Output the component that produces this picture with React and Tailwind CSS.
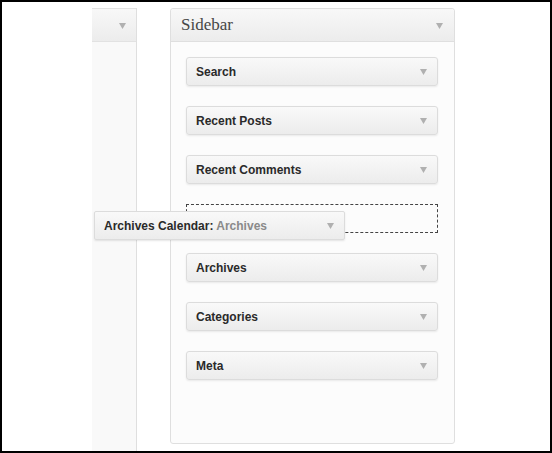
import React from "react";

const Arrow = () => (
  <svg width="7" height="7" viewBox="0 0 7 7" className="shrink-0">
    <polygon points="0,1 7,1 3.5,7" fill="#b0b0b0" />
  </svg>
);

const Widget = ({ title, sub }) => (
  <div className="w-[252px] h-[29px] flex items-center justify-between pl-[9px] pr-[10px] border border-[#dcdcdc] rounded-[3px] bg-gradient-to-b from-[#f9f9f9] to-[#ececec] shadow-[0_1px_2px_rgba(0,0,0,0.08)]">
    <span className="text-[12px] font-bold text-[#2a2a2a]">
      {title}
      {sub && <span className="text-[#8a8a8a]"> {sub}</span>}
    </span>
    <Arrow />
  </div>
);

const widgets = ["Search", "Recent Posts", "Recent Comments", null, "Archives", "Categories", "Meta"];

export default function App() {
  return (
    <div className="w-[552px] h-[453px] border-2 border-black bg-white relative overflow-hidden font-['Liberation_Sans',Arial,sans-serif]">
      <div className="flex items-start pl-[90px] pt-[6px]">
        {/* left widget area, cut off */}
        <div className="w-[45px] h-[460px] border-r border-[#dfdfdf] bg-[#f9f9f9] flex flex-col">
          <div className="h-[34px] border-t border-b border-[#e2e2e2] bg-gradient-to-b from-[#f8f8f8] to-[#ececec] flex items-center justify-end pr-[10px]">
            <Arrow />
          </div>
        </div>

        {/* Sidebar */}
        <div className="ml-[33px] w-[285px] h-[436px] border border-[#dfdfdf] rounded-[3px] bg-[#fcfcfc] flex flex-col">
          <div className="h-[33px] border-b border-[#dfdfdf] rounded-t-[3px] bg-gradient-to-b from-[#f8f8f8] to-[#ececec] flex items-center justify-between pl-[10px] pr-[11px]">
            <span className="text-[17px] text-[#464646] font-['Liberation_Serif',Georgia,serif]">Sidebar</span>
            <Arrow />
          </div>
          <div className="flex flex-col gap-[20px] pt-[15px] pl-[15px]">
            {widgets.map((w, i) =>
              w ? (
                <Widget key={i} title={w} />
              ) : (
                <div key={i} className="w-[252px] h-[29px] border border-dashed border-[#444]" />
              )
            )}
          </div>
        </div>
      </div>

      {/* widget being dragged */}
      <div className="absolute left-[92px] top-[209px]">
        <div className="w-[251px] h-[29px] flex items-center justify-between pl-[9px] pr-[10px] border border-[#dcdcdc] rounded-[2px] bg-gradient-to-b from-[#f9f9f9] to-[#ececec] shadow-[0_1px_2px_rgba(0,0,0,0.1)]">
          <span className="text-[12px] font-bold text-[#2a2a2a]">
            Archives Calendar:<span className="text-[#8a8a8a]"> Archives</span>
          </span>
          <Arrow />
        </div>
      </div>
    </div>
  );
}
